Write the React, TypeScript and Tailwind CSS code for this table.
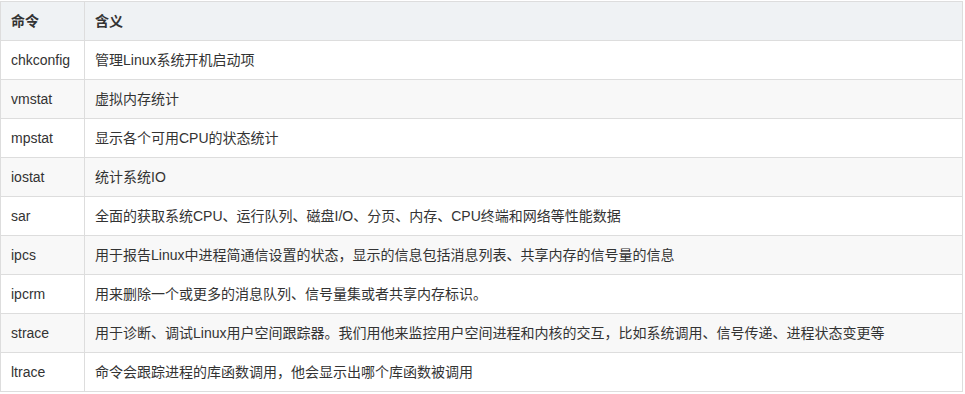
import React from "react";

const rows: [string, string][] = [
  ["chkconfig", "管理Linux系统开机启动项"],
  ["vmstat", "虚拟内存统计"],
  ["mpstat", "显示各个可用CPU的状态统计"],
  ["iostat", "统计系统IO"],
  ["sar", "全面的获取系统CPU、运行队列、磁盘I/O、分页、内存、CPU终端和网络等性能数据"],
  ["ipcs", "用于报告Linux中进程简通信设置的状态，显示的信息包括消息列表、共享内存的信号量的信息"],
  ["ipcrm", "用来删除一个或更多的消息队列、信号量集或者共享内存标识。"],
  ["strace", "用于诊断、调试Linux用户空间跟踪器。我们用他来监控用户空间进程和内核的交互，比如系统调用、信号传递、进程状态变更等"],
  ["ltrace", "命令会跟踪进程的库函数调用，他会显示出哪个库函数被调用"],
];

export default function App() {
  return (
    <div
      className="w-[965px] h-[394px] bg-white pt-px text-[14px] text-[#333]"
      style={{ fontFamily: '"Liberation Sans", Arial, "Noto Sans CJK SC", sans-serif' }}
    >
      <table className="w-[963px] border-collapse">
        <thead>
          <tr className="bg-[#eff2f4] h-[39px]">
            <th className="w-[84px] border border-[#dddddd] px-[10px] text-left font-bold">命令</th>
            <th className="border border-[#dddddd] px-[10px] text-left font-bold">含义</th>
          </tr>
        </thead>
        <tbody>
          {rows.map(([a, b], i) => (
            <tr key={a} className={i % 2 === 1 ? "bg-[#f8f8f8] h-[39px]" : "bg-white h-[39px]"}>
              <td className="border border-[#dddddd] px-[10px] py-0 leading-[20px]">{a}</td>
              <td className="border border-[#dddddd] px-[10px] py-0 leading-[20px] whitespace-nowrap">{b}</td>
            </tr>
          ))}
        </tbody>
      </table>
    </div>
  );
}
